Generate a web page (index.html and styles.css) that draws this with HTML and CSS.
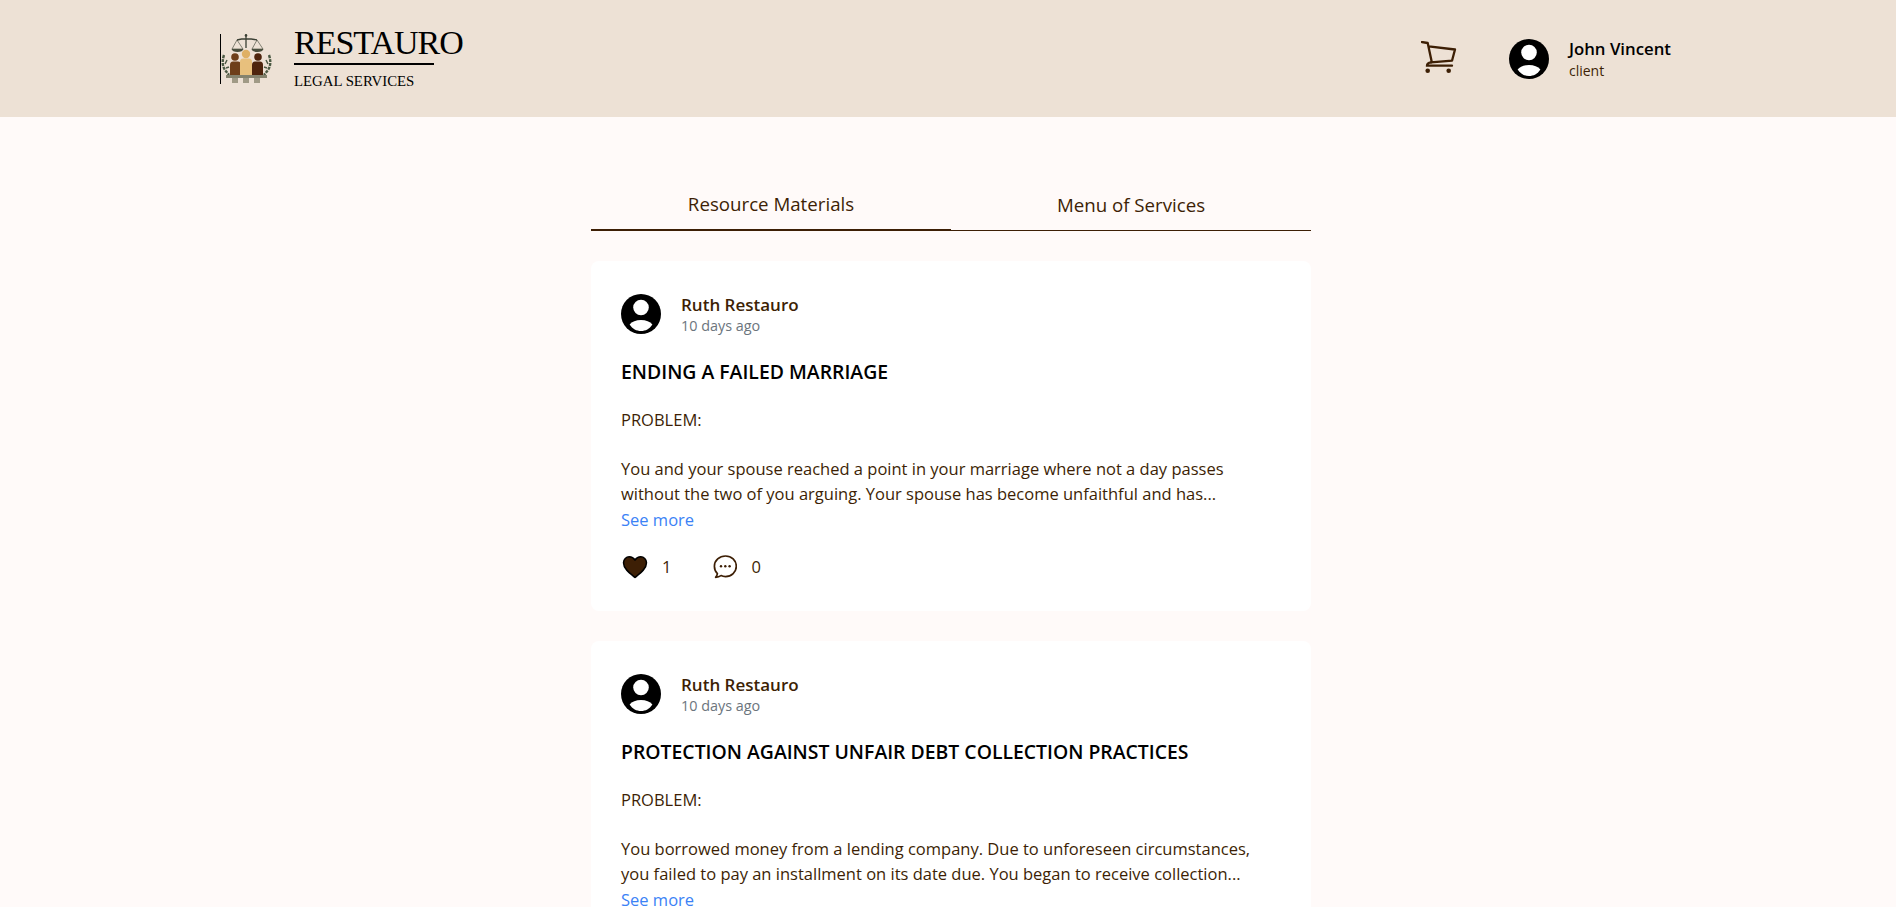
FILE: index.html
```html
<!DOCTYPE html>
<html lang="en">
<head>
<meta charset="utf-8">
<title>Restauro Legal Services</title>
<link rel="stylesheet" href="styles.css">
</head>
<body>
<svg class="defs" width="0" height="0" aria-hidden="true">
  <symbol id="avatar" viewBox="0 0 40 40">
    <circle cx="20" cy="20" r="20" fill="#000"/>
    <circle cx="20" cy="13.500" r="7.800" fill="#fff"/>
    <path d="M8.600 30.500C11 27.500 15 26 20 26s9 1.500 11.400 4.500C28.500 35 24.500 37 20 37s-8.500-2-11.400-6.500z" fill="#fff"/>
  </symbol>
  <symbol id="heart" viewBox="0 0 26 24">
    <path d="M13 22.500C8 18.500 1.500 14 1.500 7.800 1.500 4.300 4.200 1.800 7.300 1.800c2.400 0 4.400 1.200 5.700 3.200 1.300-2 3.300-3.200 5.700-3.200 3.100 0 5.800 2.500 5.800 6 0 6.200-6.500 10.700-11.500 14.700z" fill="#3d1f05" stroke="#000" stroke-width="1.500" stroke-linejoin="round"/>
  </symbol>
  <symbol id="comment" viewBox="0 0 24 24">
    <path d="M12.500 1c6 0 10.800 4.500 10.800 10.300s-4.800 10.300-10.800 10.300c-1.700 0-3.100-.3-4.500-1-1.400 1-3.200 1.600-5.400 1.700 1-1.100 1.600-2.300 1.800-3.700-2-1.900-3-4.500-3-7.300C1.400 5.500 6.500 1 12.500 1z" fill="none" stroke="#3d1f05" stroke-width="1.700" stroke-linejoin="round"/>
    <circle cx="8" cy="11.300" r="1.200" fill="#3d1f05"/>
    <circle cx="12.300" cy="11.300" r="1.200" fill="#3d1f05"/>
    <circle cx="16.600" cy="11.300" r="1.200" fill="#3d1f05"/>
  </symbol>
</svg>
<div class="page">
  <header class="topbar">
    <div class="brand">
      <svg class="logo" viewBox="0 0 54 50" aria-hidden="true">
        <path d="M.5 0v50" stroke="#000" stroke-width="1"/>
        <path d="M26 0v14M17 6q9-2.500 20 0" stroke="#3a3f33" stroke-width="1.300" fill="none"/>
        <circle cx="26" cy="1.500" r="1.300" fill="#3a3f33"/>
        <path d="M17 6l-5 9h11zM37 6l-5 9h11z" stroke="#3a3f33" stroke-width=".6" fill="none"/>
        <path d="M11.500 15h12q-1 3-6 3t-6-3zM31.500 15h12q-1 3-6 3t-6-3z" fill="#4a4f3e"/>
        <path d="M4 21q-3 9 1 15l4 5M49 21q3 9-1 15l-4 5" stroke="#4c5a44" stroke-width="2.400" fill="none" stroke-dasharray="3 1"/>
        <path d="M7 26l-2 4M46 26l2 4M9 33l-3 1M44 33l3 1" stroke="#4c5a44" stroke-width="1.500"/>
        <circle cx="15" cy="23" r="3.800" fill="#6e3f1a"/>
        <path d="M10 31q0-3.500 3-3.500h5q3 0 3 3.500v10H10z" fill="#6e3f1a"/>
        <circle cx="38" cy="23" r="3.800" fill="#4e240d"/>
        <path d="M32 31q0-3.500 3-3.500h5q3 0 3 3.500v10H32z" fill="#4e240d"/>
        <circle cx="26" cy="20" r="4.200" fill="#dfb065"/>
        <path d="M20 28q0-3.500 3-3.500h6q3 0 3 3.500v13H20z" fill="#e8c07d"/>
        <path d="M6 41h41v3H6z" fill="#85836e"/>
        <path d="M12 44h6v5h-6zM23 44h6v5h-6zM34 44h6v5h-6z" fill="#a09a86"/>
      </svg>
      <div class="brand-text">
        <span class="brand-name">RESTAURO</span>
        <span class="brand-sub">LEGAL SERVICES</span>
      </div>
    </div>
    <div class="account">
      <svg class="cart" viewBox="0 0 36 34" aria-hidden="true">
        <path d="M1 1 6.700 2l4 18.700M7.700 5.300 34 8.500l-3 11.200-21 1.600" fill="none" stroke="#3d1f05" stroke-width="2.300" stroke-linejoin="round" stroke-linecap="round"/>
        <path d="M10 21.300q-4 .4-4 3.400h25" fill="none" stroke="#3d1f05" stroke-width="2.300" stroke-linecap="round"/>
        <circle cx="6.700" cy="29.700" r="2.300" fill="#3d1f05"/><circle cx="27.700" cy="29.700" r="2.300" fill="#3d1f05"/>
      </svg>
      <svg class="avatar"><use href="#avatar"/></svg>
      <div class="user">
        <span class="user-name">John Vincent</span>
        <span class="user-role">client</span>
      </div>
    </div>
  </header>
  <main class="feed">
    <nav class="tabs">
      <a class="tab tab-active">Resource Materials</a>
      <a class="tab">Menu of Services</a>
    </nav>
    <article class="post">
      <div class="author">
        <svg class="avatar"><use href="#avatar"/></svg>
        <div class="author-meta">
          <span class="author-name">Ruth Restauro</span>
          <span class="post-age">10 days ago</span>
        </div>
      </div>
      <h2 class="post-title">ENDING A FAILED MARRIAGE</h2>
      <p class="post-body">PROBLEM:</p>
      <p class="post-body post-gap">You and your spouse reached a point in your marriage where not a day passes without the two of you arguing. Your spouse has become unfaithful and has...</p>
      <a class="see-more">See more</a>
      <div class="reactions">
        <span class="reaction"><svg class="react-icon"><use href="#heart"/></svg>1</span>
        <span class="reaction"><svg class="react-icon react-comment"><use href="#comment"/></svg>0</span>
      </div>
    </article>
    <article class="post">
      <div class="author">
        <svg class="avatar"><use href="#avatar"/></svg>
        <div class="author-meta">
          <span class="author-name">Ruth Restauro</span>
          <span class="post-age">10 days ago</span>
        </div>
      </div>
      <h2 class="post-title">PROTECTION AGAINST UNFAIR DEBT COLLECTION PRACTICES</h2>
      <p class="post-body">PROBLEM:</p>
      <p class="post-body post-gap">You borrowed money from a lending company. Due to unforeseen circumstances, you failed to pay an installment on its date due. You began to receive collection...</p>
      <a class="see-more">See more</a>
      <div class="reactions">
        <span class="reaction"><svg class="react-icon"><use href="#heart"/></svg>1</span>
        <span class="reaction"><svg class="react-icon react-comment"><use href="#comment"/></svg>0</span>
      </div>
    </article>
  </main>
</div>
</body>
</html>
```
FILE: styles.css
```css
* { box-sizing: border-box; }
html, body { margin: 0; height: 100%; overflow: hidden; }
body { background: #fffaf9; font-family: "Open Sans", "Noto Sans", sans-serif; color: #3d1f05; }
.defs { position: absolute; }
.page { height: 907px; overflow: hidden; }
.topbar {
  height: 117px; background: #ede1d5;
  display: flex; align-items: center; justify-content: space-between;
  padding: 0 225px 0 220px;
}
.brand { display: flex; align-items: center; gap: 20px; }
.logo { width: 54px; height: 50px; }
.brand-text { display: flex; flex-direction: column; font-family: "Liberation Serif", serif; color: #000; }
.brand-name { font-size: 34px; line-height: 30px; letter-spacing: -1px; border-bottom: 2px solid #000; padding-bottom: 5px; width: 140px; white-space: nowrap; }
.brand-sub { font-size: 14.8px; line-height: 18px; margin-top: 7px; }
.account { display: flex; align-items: center; }
.cart { width: 36px; height: 34px; margin-right: 52px; margin-top: -2px; }
.avatar { width: 40px; height: 40px; flex: none; }
.user { display: flex; flex-direction: column; margin-left: 20px; padding-top: 2px; }
.user-name { font-size: 16.8px; font-weight: 600; line-height: 20px; color: #000; }
.user-role { font-size: 14px; line-height: 18px; margin-top: 3px; }
.feed { width: 720px; margin-left: 591px; padding-top: 71px; }
.tabs { display: flex; height: 43px; }
.tab { flex: 1; text-align: center; font-size: 18.7px; line-height: 24px; border-bottom: 1px solid #3d1f05; padding-top: 5px; }
.tab-active { border-bottom-width: 2px; padding-top: 4px; }
.post { background: #fff; border-radius: 8px; margin-top: 30px; padding: 33px 30px 0; height: 350px; }
.author { display: flex; align-items: flex-start; gap: 20px; }
.author-meta { display: flex; flex-direction: column; }
.author-name { font-size: 17px; font-weight: 600; line-height: 22px; }
.post-age { font-size: 14.4px; line-height: 18px; color: #6c757d; margin-top: 1px; }
.post-title { font-size: 19.4px; font-weight: 600; color: #000; margin: 25px 0 0; line-height: 24px; }
.post-body { font-size: 16.5px; line-height: 25px; margin: 23px 0 0; }
.post-gap { margin-top: 24px; }
.see-more { display: block; font-size: 16.5px; line-height: 26px; color: #3b82f6; margin-top: 1px; }
.reactions { display: flex; gap: 42px; margin-top: 21px; padding-left: 1px; }
.reaction { display: flex; align-items: center; gap: 14px; font-size: 16.5px; line-height: 26px; }
.react-icon { width: 26px; height: 24px; }
.react-comment { width: 24px; }
```
